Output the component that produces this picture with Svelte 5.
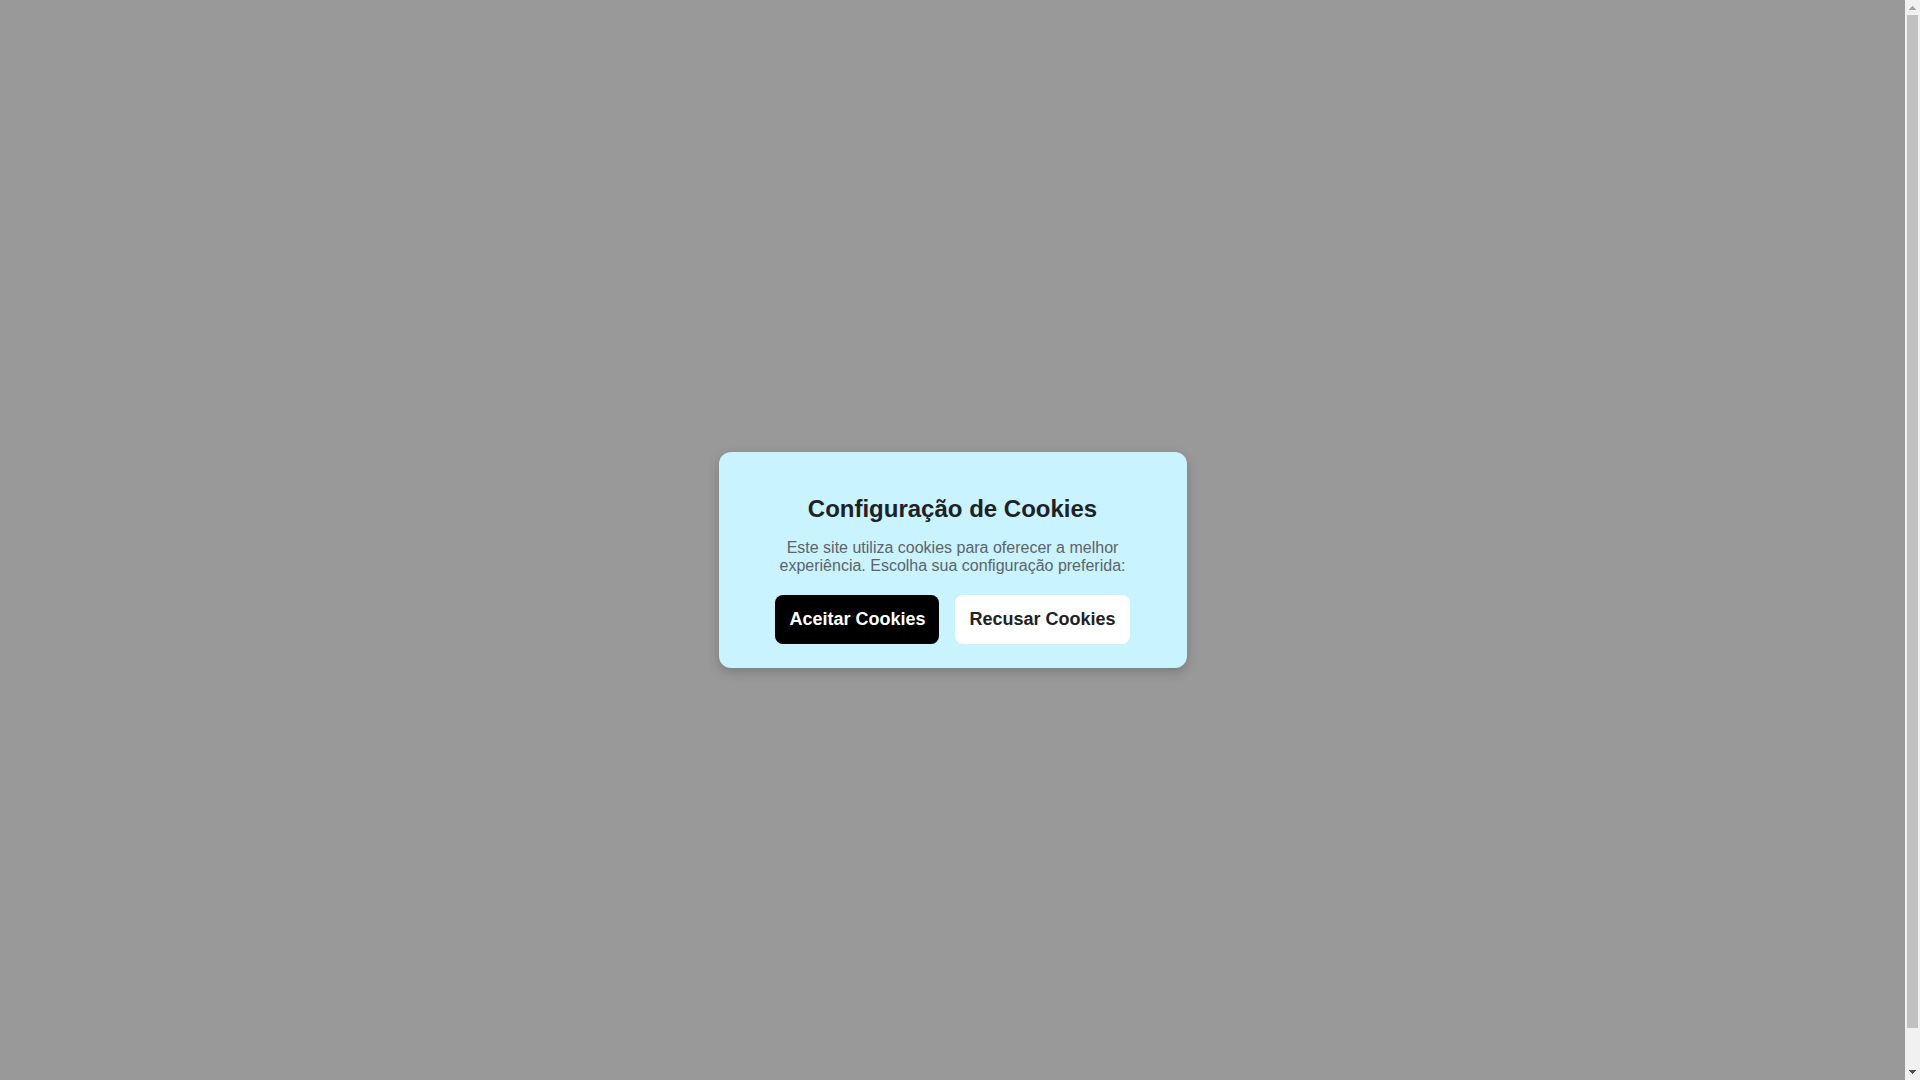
<script lang="ts">
  let visible = $state(true);

  function choose(accepted: boolean) {
    localStorage.setItem('cookies', accepted ? 'accepted' : 'refused');
    visible = false;
  }
</script>

<div class="window">
  <main class="page">
    {#if visible}
      <div class="overlay">
        <div class="modal" role="dialog" aria-labelledby="cookie-title">
          <h2 id="cookie-title">Configuração de Cookies</h2>
          <p>Este site utiliza cookies para oferecer a melhor experiência. Escolha sua configuração preferida:</p>
          <div class="actions">
            <button class="accept" onclick={() => choose(true)}>Aceitar Cookies</button>
            <button class="refuse" onclick={() => choose(false)}>Recusar Cookies</button>
          </div>
        </div>
      </div>
    {/if}
  </main>

  <div class="scrollbar" aria-hidden="true">
    <svg class="arrow" viewBox="0 0 15 15" shape-rendering="crispEdges">
      <path d="M7 6h1v1h1v1h1v1h1v1H4V9h1V8h1V7h1z" fill="#a3a3a3" />
    </svg>
    <div class="track">
      <div class="thumb"></div>
    </div>
    <svg class="arrow" viewBox="0 0 15 15" shape-rendering="crispEdges">
      <path d="M4 5h7v1h-1v1H9v1H8v1H7V8H6V7H5V6H4z" fill="#505050" />
    </svg>
  </div>
</div>

<style>
  :global(body) {
    margin: 0;
  }

  .window {
    display: flex;
    height: 100vh;
    overflow: hidden;
    font-family: "Liberation Sans", Arial, sans-serif;
  }

  .page {
    display: flex;
    flex: 1;
    background: #fff;
  }

  .overlay {
    box-sizing: border-box;
    display: flex;
    flex: 1;
    align-items: center;
    justify-content: center;
    padding-top: 40px;
    background: rgba(0, 0, 0, 0.4);
  }

  .modal {
    box-sizing: border-box;
    width: 468px;
    max-width: 90%;
    padding: 24px 56px;
    border-radius: 12px;
    background: #c9f3ff;
    box-shadow: 0 4px 12px rgba(0, 0, 0, 0.2);
    text-align: center;
  }

  h2 {
    margin: 20px 0 18px;
    color: #202124;
    font-size: 24px;
    line-height: 25px;
  }

  p {
    margin: 0 0 20px;
    color: #5f6368;
    font-size: 16px;
    line-height: 18px;
  }

  .actions {
    display: flex;
    justify-content: center;
    gap: 16px;
  }

  button {
    padding: 14px;
    border: 0;
    border-radius: 8px;
    font: bold 18px/21px "Liberation Sans", Arial, sans-serif;
    cursor: pointer;
  }

  .accept {
    background: #000;
    color: #fff;
  }

  .refuse {
    background: #fff;
    color: #202124;
  }

  .scrollbar {
    display: flex;
    flex-direction: column;
    width: 15px;
    background: #f1f1f1;
  }

  .arrow {
    display: block;
    width: 15px;
    height: 15px;
  }

  .track {
    flex: 1;
    padding: 0 2px;
  }

  .thumb {
    height: 96.5%;
    background: #c1c1c1;
  }
</style>
